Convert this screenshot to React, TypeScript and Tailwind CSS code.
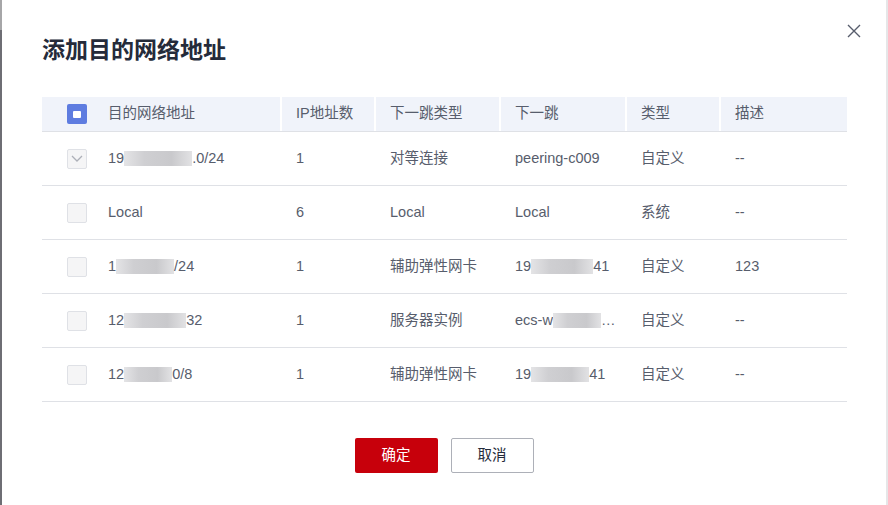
const font = { fontFamily: '"Liberation Sans", "Noto Sans CJK SC", sans-serif' }

// 模糊处理过的文字片段
function Blur({ w }: { w: number }) {
  return (
    <span
      className="inline-block h-[15px] align-middle bg-[linear-gradient(90deg,#e4e4e6,#cfcfd2_30%,#c9c9cc_70%,#e2e2e4)]"
      style={{ width: w }}
    />
  )
}

function Box({ checked }: { checked?: boolean }) {
  return (
    <span className="flex h-5 w-5 items-center justify-center rounded-[2px] border border-[#dfe1e6] bg-[#f5f5f6]">
      {checked && (
        <svg width="12" height="9" viewBox="0 0 12 9" fill="none">
          <path d="M1 2 L6 7 L11 2" stroke="#adb0b8" strokeWidth="1.3" />
        </svg>
      )}
    </span>
  )
}

const cols = ['w-[240px]', 'w-[94px]', 'w-[125px]', 'w-[126px]', 'w-[94px]', 'flex-1']

type Row = { ip: React.ReactNode; n: string; type: string; hop: React.ReactNode; kind: string; desc: string; checked?: boolean }

const rows: Row[] = [
  { ip: <>19<Blur w={68} />.0/24</>, n: '1', type: '对等连接', hop: 'peering-c009', kind: '自定义', desc: '--', checked: true },
  { ip: 'Local', n: '6', type: 'Local', hop: 'Local', kind: '系统', desc: '--' },
  { ip: <>1<Blur w={58} />/24</>, n: '1', type: '辅助弹性网卡', hop: <>19<Blur w={62} />41</>, kind: '自定义', desc: '123' },
  { ip: <>12<Blur w={62} />32</>, n: '1', type: '服务器实例', hop: <>ecs-w<Blur w={48} />…</>, kind: '自定义', desc: '--' },
  { ip: <>12<Blur w={48} />0/8</>, n: '1', type: '辅助弹性网卡', hop: <>19<Blur w={58} />41</>, kind: '自定义', desc: '--' },
]

export default function App() {
  return (
    <div className="flex h-[505px] w-[888px] bg-white text-[14.5px] text-[#575d6c]" style={font}>
      {/* 左侧遮罩边缘 */}
      <div className="flex w-[2px] flex-col">
        <div className="h-[30px] bg-[#a6a6a8]" />
        <div className="flex-1 bg-[#6e6e74]" />
      </div>

      <div className="flex flex-1 flex-col">
        <div className="flex h-[97px] items-start justify-between pl-10 pr-[25px]">
          <h1 className="mt-[36px] text-[23px] font-bold leading-[28px] text-[#252b3a]">添加目的网络地址</h1>
          <svg className="mt-[24px]" width="14" height="14" viewBox="0 0 14 14" fill="none">
            <path d="M1 1 L13 13 M13 1 L1 13" stroke="#575d6c" strokeWidth="1.4" />
          </svg>
        </div>

        <div className="ml-10 w-[805px]">
          <div className="flex h-[35px] border-b border-[#dfe1e6] bg-[#f0f3fa] text-[#575d6c]">
            {['目的网络地址', 'IP地址数', '下一跳类型', '下一跳', '类型', '描述'].map((h, i) => (
              <div key={h} className={`${cols[i]} flex items-center border-r-2 border-white last:border-r-0 ${i === 0 ? 'pl-[25px]' : 'pl-[14px]'}`}>
                {i === 0 && (
                  <span className="mr-[21px] flex h-5 w-5 items-center justify-center rounded-[2px] bg-[#5e7ce0]">
                    <span className="h-[7px] w-[8px] rounded-[1px] bg-white" />
                  </span>
                )}
                {h}
              </div>
            ))}
          </div>

          {rows.map((r, idx) => (
            <div key={idx} className="flex h-[54px] border-b border-[#dfe1e6]">
              <div className={`${cols[0]} flex items-center pl-[25px]`}>
                <span className="mr-[21px]"><Box checked={r.checked} /></span>
                <span className="whitespace-nowrap">{r.ip}</span>
              </div>
              <div className={`${cols[1]} flex items-center pl-[14px]`}>{r.n}</div>
              <div className={`${cols[2]} flex items-center pl-[14px]`}>{r.type}</div>
              <div className={`${cols[3]} flex items-center whitespace-nowrap pl-[14px]`}>{r.hop}</div>
              <div className={`${cols[4]} flex items-center pl-[14px]`}>{r.kind}</div>
              <div className={`${cols[5]} flex items-center pl-[14px]`}>{r.desc}</div>
            </div>
          ))}
        </div>

        <div className="mt-[36px] flex justify-center gap-[13px]">
          <button className="h-[35px] w-[83px] rounded-[2px] bg-[#c7000b] text-white">确定</button>
          <button className="h-[35px] w-[83px] rounded-[2px] border border-[#adb0b8] bg-white text-[#252b3a]">取消</button>
        </div>
      </div>

      <div className="w-[2px] bg-[#e6e6e8]" />
    </div>
  )
}
